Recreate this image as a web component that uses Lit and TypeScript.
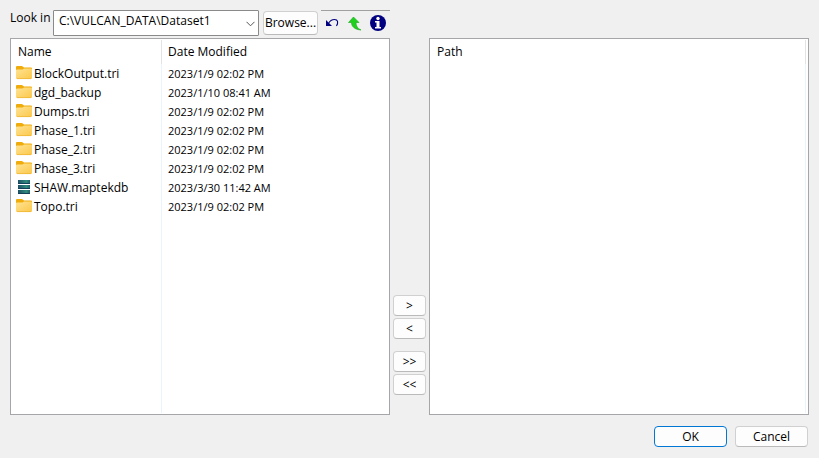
import { LitElement, html, css, svg } from "lit";
import { customElement, property } from "lit/decorators.js";

type Entry = { name: string; date: string; kind: "folder" | "db" };

const ENTRIES: Entry[] = [
  { name: "BlockOutput.tri", date: "2023/1/9 02:02 PM", kind: "folder" },
  { name: "dgd_backup", date: "2023/1/10 08:41 AM", kind: "folder" },
  { name: "Dumps.tri", date: "2023/1/9 02:02 PM", kind: "folder" },
  { name: "Phase_1.tri", date: "2023/1/9 02:02 PM", kind: "folder" },
  { name: "Phase_2.tri", date: "2023/1/9 02:02 PM", kind: "folder" },
  { name: "Phase_3.tri", date: "2023/1/9 02:02 PM", kind: "folder" },
  { name: "SHAW.maptekdb", date: "2023/3/30 11:42 AM", kind: "db" },
  { name: "Topo.tri", date: "2023/1/9 02:02 PM", kind: "folder" },
];

const folderIcon = html`<svg class="icon" viewBox="0 0 16 16" aria-hidden="true">
  <defs>
    <linearGradient id="g" x1="0" y1="0" x2="1" y2="1">
      <stop offset="0" stop-color="#ffe394" />
      <stop offset="1" stop-color="#fbc84a" />
    </linearGradient>
  </defs>
  <path d="M0 1a1 1 0 0 1 1-1h5l2 1.500h7a1 1 0 0 1 1 1V6H0z" fill="#efac0a" />
  <path d="M0 4.500a1 1 0 0 1 1-1h5.500l1.500-1h7a1 1 0 0 1 1 1V12a1 1 0 0 1-1 1H1a1 1 0 0 1-1-1z" fill="url(#g)" />
  <path d="M1 12.600h14" stroke="#efb535" stroke-width="0.800" />
</svg>`;

const slab = (y: number) => svg`
  <rect x="2" y=${y} width="12" height="4" fill="url(#d)" />
  <path d=${`M2 ${y + 3.5}h12`} stroke="#14405a" />`;

const dbIcon = html`<svg class="icon" viewBox="0 0 16 16" aria-hidden="true">
  <defs>
    <linearGradient id="d" x1="0" y1="0" x2="1" y2="0">
      <stop offset="0" stop-color="#1d4f66" />
      <stop offset="0.700" stop-color="#2f8a7c" />
      <stop offset="1" stop-color="#1f5f68" />
    </linearGradient>
  </defs>
  ${slab(0)}${slab(5)}${slab(10)}
</svg>`;

@customElement("file-pane")
export class FilePane extends LitElement {
  @property({ attribute: false }) entries: Entry[] = [];
  @property({ attribute: false }) columns: string[] = [];

  static styles = css`
    :host {
      display: block;
      box-sizing: border-box;
      min-width: 0;
      padding: 1px 2px 1px 0;
      background: #fff;
      border: 1px solid #a5a5aa;
    }
    table {
      width: 100%;
      height: 100%;
      table-layout: fixed;
      border-collapse: separate;
      border-spacing: 0;
    }
    th,
    td {
      box-sizing: border-box;
      padding: 0 6px;
      text-align: left;
      font-weight: 400;
      white-space: nowrap;
    }
    th {
      height: 24px;
    }
    td {
      height: 19px;
      font-size: 11px;
      line-height: 19px;
    }
    .line {
      border-right: 1px solid #ebf4fe;
    }
    th.line {
      padding-left: 7px;
      border-right-color: #e3e3e3;
    }
    .first {
      width: 151px;
    }
    .name {
      padding: 0 0 0 5px;
      font-size: 12px;
    }
    .entry {
      display: flex;
      align-items: center;
      gap: 2px;
    }
    .rest td {
      height: auto;
    }
    .icon {
      display: block;
      width: 16px;
      height: 16px;
      flex: none;
    }
  `;

  render() {
    const split = this.columns.length > 1;
    const cell = (i: number) => (i > 0 ? "" : split ? "line first" : "line");
    return html`<table>
      <thead>
        <tr>
          ${this.columns.map((c, i) => html`<th scope="col" class=${cell(i)}>${c}</th>`)}
        </tr>
      </thead>
      <tbody>
        ${this.entries.map(
          (e) => html`<tr>
            <td class="line first name">
              <div class="entry">${e.kind === "db" ? dbIcon : folderIcon}<span>${e.name}</span></div>
            </td>
            <td>${e.date}</td>
          </tr>`
        )}
        <tr class="rest">
          ${this.columns.map((_, i) => html`<td class=${cell(i)}></td>`)}
        </tr>
      </tbody>
    </table>`;
  }
}

@customElement("app-root")
export class AppRoot extends LitElement {
  static styles = css`
    :host {
      display: flex;
      flex-direction: column;
      box-sizing: border-box;
      min-height: 100vh;
      padding: 10px 10px 11px;
      background: #f0f0f0;
      color: #000;
      font: 12px/16px "Segoe UI", "Open Sans", "Noto Sans", sans-serif;
    }
    .bar {
      display: flex;
      height: 28px;
    }
    .bar label {
      width: 43px;
    }
    .combo {
      position: relative;
      width: 206px;
      height: 26px;
    }
    select {
      appearance: none;
      box-sizing: border-box;
      width: 100%;
      height: 100%;
      padding: 0 20px 4px 5px;
      background: #fff;
      border: 1px solid #8a8a8a;
      border-radius: 1px;
      color: inherit;
      font: inherit;
    }
    .chevron {
      position: absolute;
      right: 4px;
      top: 11px;
      width: 9px;
      height: 6px;
      pointer-events: none;
    }
    button {
      box-sizing: border-box;
      margin: 0;
      padding: 0;
      background: #fdfdfd;
      border: 1px solid #d0d0d0;
      border-bottom-color: #bababa;
      border-radius: 4px;
      color: inherit;
      font: inherit;
    }
    .browse {
      width: 55px;
      height: 24px;
      margin: 1px 3px 0 4px;
    }
    .tools {
      display: flex;
      box-sizing: border-box;
      width: 69px;
      height: 25px;
      border-top: 1px solid #a0a0a0;
    }
    .tool {
      width: 23px;
      height: 24px;
      padding: 0 4px 0 3px;
      background: none;
      border: 0;
    }
    .tool svg {
      display: block;
      width: 16px;
      height: 16px;
    }
    .panes {
      display: grid;
      flex: 1;
      grid-template-columns: minmax(0, 1fr) 33px minmax(0, 1fr);
      gap: 3px;
    }
    .move {
      display: flex;
      flex-direction: column;
      justify-content: flex-end;
      gap: 12px;
      padding-bottom: 20px;
    }
    .pair {
      display: grid;
      gap: 2px;
    }
    .pair button {
      height: 21px;
    }
    .footer {
      display: flex;
      justify-content: flex-end;
      gap: 8px;
      padding: 11px 1px 0 0;
    }
    .footer button {
      width: 73px;
      height: 21px;
    }
    .footer .ok {
      border-color: #0078d4;
    }
  `;

  render() {
    return html`
      <div class="bar">
        <label for="look">Look in</label>
        <div class="combo">
          <select id="look">
            <option>C:\\VULCAN_DATA\\Dataset1</option>
          </select>
          <svg class="chevron" viewBox="0 0 9 6" aria-hidden="true">
            <path d="M0.500 0.800l4 4 4-4" fill="none" stroke="#555" />
          </svg>
        </div>
        <button class="browse">Browse...</button>
        <div class="tools">
          <button class="tool" aria-label="Undo">
            <svg viewBox="0 0 16 16">
              <path d="M2 5v6h6z" fill="#000080" />
              <path d="M4.500 8.500C6 5.500 8.500 4.500 10.500 4.500c3.500 0 4 3 2 6.500" fill="none" stroke="#000080" stroke-width="1.100" />
            </svg>
          </button>
          <button class="tool" aria-label="Up one level">
            <svg viewBox="0 0 16 16">
              <path d="M6.500 2L1.500 7.500h3c0 4 3 7 9.500 7.500-3.500-1.500-5-4-5-7.500h3z" fill="#1fd01f" stroke="#17a51b" stroke-width="0.600" />
            </svg>
          </button>
          <button class="tool" aria-label="Information">
            <svg viewBox="0 0 16 16">
              <circle cx="8" cy="8" r="8" fill="#000080" />
              <circle cx="8" cy="3.500" r="1.700" fill="#fff" />
              <path d="M5 6h4.500v6H11v1.500H5V12h1.500V7.500H5z" fill="#fff" />
            </svg>
          </button>
        </div>
      </div>
      <div class="panes">
        <file-pane .columns=${["Name", "Date Modified"]} .entries=${ENTRIES}></file-pane>
        <div class="move">
          <div class="pair"><button>&gt;</button><button>&lt;</button></div>
          <div class="pair"><button>&gt;&gt;</button><button>&lt;&lt;</button></div>
        </div>
        <file-pane .columns=${["Path"]}></file-pane>
      </div>
      <div class="footer">
        <button class="ok">OK</button>
        <button>Cancel</button>
      </div>
    `;
  }
}
